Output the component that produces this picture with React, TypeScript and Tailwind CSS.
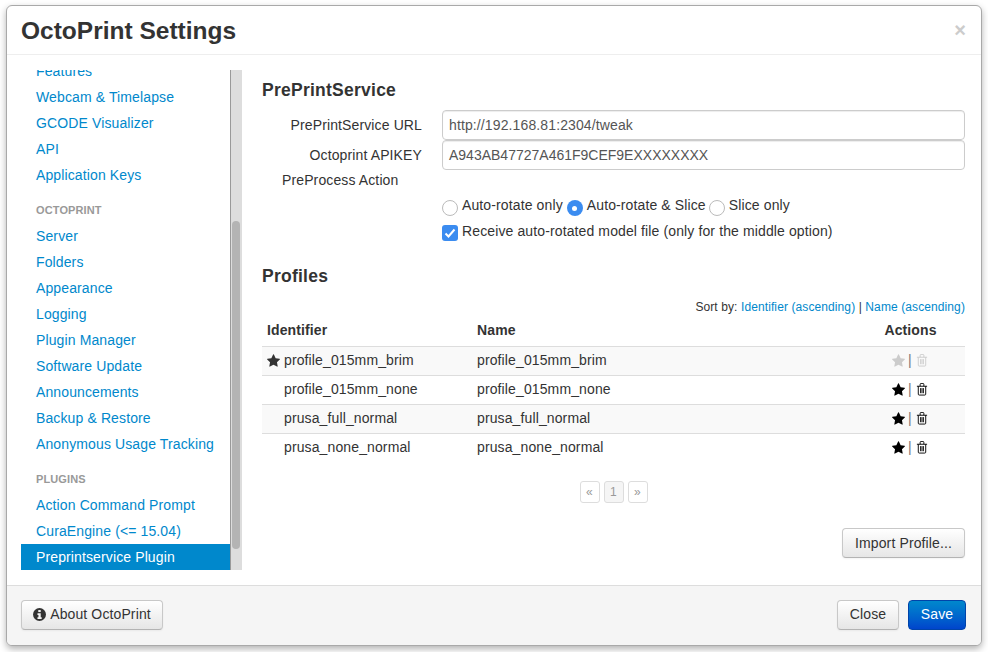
import React from 'react';

const Star = ({ className }: { className: string }) => (
  <svg viewBox="0 0 1664 1792" className={className} fill="currentColor">
    <path d="M1664 647q0 22-26 48l-363 354 86 500q1 7 1 20 0 21-10.500 35.500t-30.500 14.500q-19 0-40-12l-449-236-449 236q-22 12-40 12-21 0-31.500-14.500t-10.500-35.500q0-6 2-20l86-500-364-354q-25-27-25-48 0-37 56-46l502-73 225-455q19-41 49-41t49 41l225 455 502 73q56 9 56 46z" />
  </svg>
);

const Trash = ({ className }: { className: string }) => (
  <svg viewBox="0 0 12 14" className={className} fill="none" stroke="currentColor" strokeWidth="1">
    <path d="M0.500 3.500h11M2 3.500v8.500q0 1 1 1h6q1 0 1-1V3.500M4 3.500V1.500q0-1 1-1h2q1 0 1 1v2M4.500 5.500v5.500M6 5.500v5.500M7.500 5.500v5.500" />
  </svg>
);

const generalLinks = ['Features', 'Webcam & Timelapse', 'GCODE Visualizer', 'API', 'Application Keys'];
const octoprintLinks = [
  'Server',
  'Folders',
  'Appearance',
  'Logging',
  'Plugin Manager',
  'Software Update',
  'Announcements',
  'Backup & Restore',
  'Anonymous Usage Tracking',
];
const profiles = ['profile_015mm_brim', 'profile_015mm_none', 'prusa_full_normal', 'prusa_none_normal'];

const NavLink = ({ label }: { label: string }) => (
  <a className="block h-[26px] pl-[15px] leading-[26px] text-[14px] text-[#0088cc] whitespace-nowrap">{label}</a>
);

const NavHeader = ({ label }: { label: string }) => (
  <div className="h-[26px] pl-[15px] leading-[26px] text-[11px] font-bold text-[#999999]">{label}</div>
);

const greyBtn =
  'rounded-[4px] border border-[#c8c8c8] border-b-[#b3b3b3] bg-gradient-to-b from-white to-[#e6e6e6] text-[14px] text-[#333333] shadow-[inset_0_1px_0_rgba(255,255,255,0.2),0_1px_2px_rgba(0,0,0,0.05)]';

export default function App() {
  return (
    <div className="h-[652px] w-[988px] overflow-hidden bg-white pl-[6px] pt-[5px] font-['Liberation_Sans',Arial,sans-serif] text-[14px] tracking-[0.12px] text-[#333333]">
      <div className="flex h-[641px] w-[976px] flex-col overflow-hidden rounded-[6px] border border-[#a9a9a9] bg-white shadow-[0_3px_7px_rgba(0,0,0,0.3)]">
        {/* Header */}
        <div className="flex h-[49px] shrink-0 items-center justify-between border-b border-[#eeeeee] pl-[14px] pr-[15px]">
          <h3 className="mt-[2px] text-[24.5px] font-bold leading-[30px] tracking-normal text-[#333333]">OctoPrint Settings</h3>
          <span className="mb-[1px] text-[20px] font-bold leading-[20px] text-[#cccccc]">×</span>
        </div>

        {/* Body */}
        <div className="flex h-[530px] shrink-0 pl-[14px] pt-[15px]">
          <div className="relative flex h-[500px] w-[221px] shrink-0 overflow-hidden">
            <div className="h-[500px] w-[210px] overflow-hidden border-r border-[#999999]">
              <div className="-mt-[12px]">
                {generalLinks.map((l) => (
                  <NavLink key={l} label={l} />
                ))}
                <div className="h-[9px]" />
                <NavHeader label="OCTOPRINT" />
                {octoprintLinks.map((l) => (
                  <NavLink key={l} label={l} />
                ))}
                <div className="h-[9px]" />
                <NavHeader label="PLUGINS" />
                <NavLink label="Action Command Prompt" />
                <NavLink label="CuraEngine (<= 15.04)" />
                <a className="block h-[26px] bg-[#0088cc] pl-[15px] leading-[26px] text-white">Preprintservice Plugin</a>
              </div>
            </div>
            <div className="w-[11px] bg-[#dddddd]" />
            <div className="absolute left-[211px] top-[151px] h-[328px] w-[8px] rounded-[4px] bg-[#b4b4b4]" />
          </div>

          <div className="ml-[20px] w-[703px] shrink-0">
            <h4 className="mt-[10px] text-[17.500px] font-bold leading-[20px] tracking-[0.25px] text-[#333333]">PrePrintService</h4>
            <div className="mt-[10px] flex h-[30px] items-center">
              <label className="w-[160px] text-right text-[#333333]">PrePrintService URL</label>
              <div className="ml-[20px] flex h-[30px] flex-1 items-center rounded-[4px] border border-[#cccccc] px-[6px] text-[#555555] shadow-[inset_0_1px_1px_rgba(0,0,0,0.075)]">
                http://192.168.81:2304/tweak
              </div>
            </div>
            <div className="flex h-[30px] items-center">
              <label className="w-[160px] text-right text-[#333333]">Octoprint APIKEY</label>
              <div className="ml-[20px] flex h-[30px] flex-1 items-center rounded-[4px] border border-[#cccccc] px-[6px] tracking-normal text-[#555555] shadow-[inset_0_1px_1px_rgba(0,0,0,0.075)]">
                A943AB47727A461F9CEF9EXXXXXXXX
              </div>
            </div>
            <div className="h-[20px] pl-[20px] leading-[20px]">PreProcess Action</div>

            <div className="ml-[180px] mt-[5px] flex h-[20px] items-center">
              <span className="mt-[6px] h-[16px] w-[16px] rounded-full border border-[#bbbbbb] bg-white" />
              <span className="ml-[4px]">Auto-rotate only</span>
              <span className="ml-[4px] mt-[6px] flex h-[16px] w-[16px] items-center justify-center rounded-full bg-[#3b8cf0]">
                <span className="h-[5px] w-[5px] rounded-full bg-white" />
              </span>
              <span className="ml-[4px]">Auto-rotate &amp; Slice</span>
              <span className="ml-[3px] mt-[6px] h-[16px] w-[16px] rounded-full border border-[#bbbbbb] bg-white" />
              <span className="ml-[4px]">Slice only</span>
            </div>
            <div className="ml-[180px] mt-[6px] flex h-[20px] items-center">
              <span className="mt-[4px] flex h-[16px] w-[16px] items-center justify-center rounded-[3px] bg-[#3b8cf0]">
                <svg viewBox="0 0 16 16" className="h-[16px] w-[16px]" fill="none" stroke="white" strokeWidth="2">
                  <path d="M3.500 8.500l3 3 6-7" />
                </svg>
              </span>
              <span className="ml-[4px]">Receive auto-rotated model file (only for the middle option)</span>
            </div>

            <h4 className="mt-[25px] text-[17.500px] font-bold leading-[20px] tracking-[0.25px] text-[#333333]">Profiles</h4>
            <div className="mt-[14px] text-right text-[12px] leading-[14px] tracking-[0.1px]">
              Sort by: <a className="text-[#0088cc]">Identifier (ascending)</a> | <a className="text-[#0088cc]">Name (ascending)</a>
            </div>

            <table className="mt-[2px] w-full table-fixed border-collapse">
              <thead>
                <tr className="h-[30px] text-left font-bold">
                  <th className="w-[215px] pl-[5px]">Identifier</th>
                  <th className="pl-0">Name</th>
                  <th className="w-[118px] text-center">
                    <span className="pl-[9px]">Actions</span>
                  </th>
                </tr>
              </thead>
              <tbody>
                {profiles.map((p, i) => (
                  <tr key={p} className={`h-[29px] border-t border-[#dddddd] ${i % 2 === 0 ? 'bg-[#f9f9f9]' : 'bg-white'}`}>
                    <td className="pl-[5px]">
                      <div className="flex items-center">
                        <span className="w-[17px]">{i === 0 && <Star className="h-[14px] w-[13px] text-[#333333]" />}</span>
                        {p}
                      </div>
                    </td>
                    <td>{p}</td>
                    <td>
                      <div className={`flex items-center pl-[45px] ${i === 0 ? 'text-[#cccccc]' : 'text-black'}`}>
                        <Star className="h-[14px] w-[13px]" />
                        <span className="ml-[3px] mr-[4px] text-[#777777]">|</span>
                        <Trash className="h-[13px] w-[12px]" />
                      </div>
                    </td>
                  </tr>
                ))}
              </tbody>
            </table>

            <div className="mt-[19px] flex justify-center gap-[4px] text-[12px] text-[#999999]">
              <span className="flex h-[22px] w-[20px] items-center justify-center rounded-[3px] border border-[#dddddd] bg-white">«</span>
              <span className="flex h-[22px] w-[20px] items-center justify-center rounded-[3px] border border-[#dddddd] bg-[#f5f5f5]">1</span>
              <span className="flex h-[22px] w-[20px] items-center justify-center rounded-[3px] border border-[#dddddd] bg-white">»</span>
            </div>

            <div className="mt-[25px] flex justify-end">
              <button className={`h-[30px] w-[123px] ${greyBtn}`}>Import Profile...</button>
            </div>
          </div>
        </div>

        {/* Footer */}
        <div className="flex flex-1 items-center justify-between border-t border-[#dddddd] bg-[#f5f5f5] pb-[2px] pl-[14px] pr-[15px]">
          <button className={`flex h-[30px] w-[142px] items-center justify-center gap-[4px] ${greyBtn}`}>
            <svg viewBox="0 0 16 16" className="h-[13px] w-[13px]">
              <circle cx="8" cy="8" r="8" fill="#333333" />
              <rect x="6.500" y="2.500" width="3" height="2.500" fill="#f5f5f5" />
              <path d="M5.500 6.500h4v5h1.200v2H5.500v-2h1.200v-3H5.500z" fill="#f5f5f5" />
            </svg>
            About OctoPrint
          </button>
          <div className="flex gap-[9px]">
            <button className={`h-[30px] w-[62px] ${greyBtn}`}>Close</button>
            <button className="h-[30px] w-[58px] rounded-[4px] border border-[#0044aa] bg-gradient-to-b from-[#0088cc] to-[#0044cc] text-white">Save</button>
          </div>
        </div>
      </div>
    </div>
  );
}
